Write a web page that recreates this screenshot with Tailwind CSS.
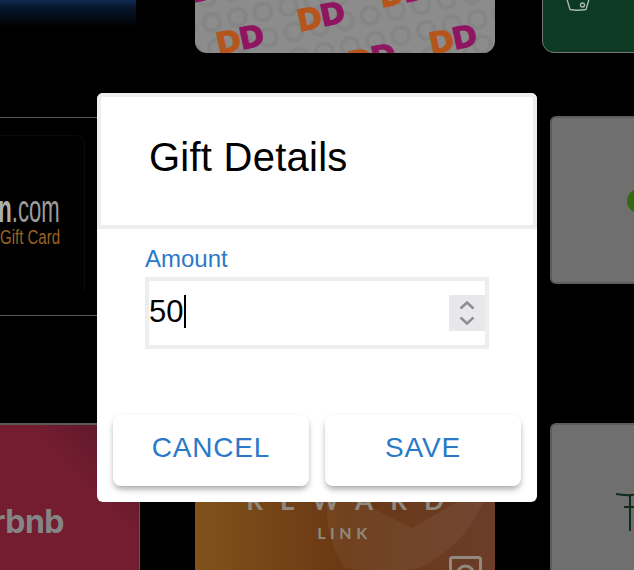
<!DOCTYPE html>
<html lang="en">
<head>
  <meta charset="UTF-8" />
  <meta name="viewport" content="width=device-width, initial-scale=1.0"/>
  <title>Gift Details</title>
  <script src="https://cdn.jsdelivr.net/npm/@tailwindcss/browser@4"></script>
</head>
<body class="bg-black">
  <div class="relative w-[634px] h-[570px] overflow-hidden bg-black font-['Liberation_Sans',sans-serif]">

    <!-- Gift cards dimmed behind the dialog -->
    <div class="absolute left-0 top-0 w-[136px] h-[30px] rounded-br-lg bg-[linear-gradient(#0d2950_0,#0c2546_3px,#081a32_5px,#000_28px)]"></div>

    <div class="absolute left-[195px] top-[-120px] w-[300px] h-[173px] rounded-xl bg-[#8c8c8c] overflow-hidden font-['DejaVu_Sans',sans-serif] font-bold text-[30px] leading-none tracking-[-1.5px]">
      <svg class="absolute inset-0" width="300" height="173">
        <defs>
          <pattern id="donuts" width="26" height="26" patternUnits="userSpaceOnUse" patternTransform="rotate(-12)">
            <circle cx="13" cy="13" r="8.5" fill="none" stroke="#858585" stroke-width="4"/>
          </pattern>
        </defs>
        <rect width="300" height="173" fill="url(#donuts)"/>
      </svg>
      <div class="absolute left-[-28px] top-[98px] -rotate-12 [-webkit-text-stroke:1px]"><span class="text-[#b5551c]">D</span><span class="text-[#8f1560]">D</span></div>
      <div class="absolute left-[21px] top-[145px] -rotate-12 [-webkit-text-stroke:1px]"><span class="text-[#b5551c]">D</span><span class="text-[#8f1560]">D</span></div>
      <div class="absolute left-[102px] top-[122px] -rotate-12 [-webkit-text-stroke:1px]"><span class="text-[#b5551c]">D</span><span class="text-[#8f1560]">D</span></div>
      <div class="absolute left-[184px] top-[98px] -rotate-12 [-webkit-text-stroke:1px]"><span class="text-[#b5551c]">D</span><span class="text-[#8f1560]">D</span></div>
      <div class="absolute left-[234px] top-[145px] -rotate-12 [-webkit-text-stroke:1px]"><span class="text-[#b5551c]">D</span><span class="text-[#8f1560]">D</span></div>
      <div class="absolute left-[153px] top-[164px] -rotate-12 [-webkit-text-stroke:1px]"><span class="text-[#b5551c]">D</span><span class="text-[#8f1560]">D</span></div>
    </div>

    <div class="absolute left-[542px] top-[-100px] w-[200px] h-[153px] rounded-xl border border-[#777] bg-[#0c3a23]">
      <svg class="absolute left-[22px] top-[92px]" width="26" height="20" viewBox="0 0 26 20" fill="none" stroke="#a9b8ae" stroke-width="1.4">
        <path d="M1 3 L5 16.5 Q12 18 21 16.5 L25 3"/>
        <circle cx="17.5" cy="12" r="2"/>
      </svg>
    </div>

    <div class="absolute left-[-20px] top-[117px] w-[180px] h-[199px] border-y border-[#5a5a5a] bg-black">
      <div class="absolute left-0 top-[17px] w-[105px] h-[160px] rounded-lg border-r border-t border-[#0a0a0a]"></div>
      <div class="absolute right-[100px] top-[72px] text-[38px] leading-none text-[#9c9c9c] whitespace-nowrap scale-x-[0.58] origin-right"><span class="font-bold text-[#b0b0b0]">n</span>.com</div>
      <div class="absolute right-[100px] top-[109px] text-[20px] leading-none text-[#9b6320] whitespace-nowrap scale-x-75 origin-right">Gift Card</div>
    </div>

    <div class="absolute left-[550px] top-[116px] w-[200px] h-[168px] rounded-md border-2 border-[#5c5c5c] bg-[#6f6f6f]">
      <div class="absolute left-[75px] top-[71px] w-[24px] h-[24px] rounded-full border-[7px] border-[#356a14]"></div>
    </div>

    <div class="absolute left-[-20px] top-[423px] w-[160px] h-[170px] border-t-2 border-r border-[#5a5a5a] bg-gradient-to-bl from-[#5a1727] from-[6%] to-[#741d31] to-[35%]">
      <div class="absolute right-[75px] top-[81px] text-[32px] leading-none font-bold tracking-[-0.5px] text-[#858585] font-['Inter',sans-serif]">rbnb</div>
    </div>

    <div class="absolute left-[195px] top-[440px] w-[300px] h-[160px] bg-gradient-to-r from-[#80521a] via-[#6a3814] to-[#6b3d28] overflow-hidden font-['Lato',sans-serif] text-center text-[#8f897f]">
      <svg class="absolute left-0 top-0" width="300" height="160" viewBox="0 0 300 160" fill="#ffffff" fill-opacity="0.05">
        <path d="M132 62 L165 62 L217 88 L262 62 L288 62 Q270 105 225 128 Q190 135 150 128 Q130 100 132 62Z"/>
      </svg>
      <div class="absolute left-0 right-0 top-[47px] text-[26px] font-bold leading-none tracking-[17px] pl-[17px]">REWARD</div>
      <div class="absolute left-0 right-0 top-[85px] text-[16px] font-bold leading-none tracking-[4.5px] pr-[1px]">LINK</div>
      <svg class="absolute left-[254px] top-[116px]" width="33" height="30" viewBox="0 0 33 30" fill="none" stroke="#8f897f" stroke-width="3">
        <rect x="1.5" y="1.5" width="30" height="30" rx="2"/>
        <circle cx="16.5" cy="18" r="8"/>
      </svg>
    </div>

    <div class="absolute left-[550px] top-[423px] w-[200px] h-[170px] rounded-md border-l-2 border-t-2 border-[#5c5c5c] bg-[#6f6f6f]">
      <svg class="absolute left-[64px] top-[68px]" width="24" height="42" viewBox="0 0 24 42" fill="none" stroke="#0f2c1b" stroke-width="2">
        <path d="M0 1 Q10 3 20 1.5"/>
        <path d="M8 14 H20"/>
        <path d="M14 2 V38"/>
      </svg>
    </div>

    <!-- Dialog -->
    <div class="absolute inset-0 flex justify-center items-start pt-[93px]">
      <div class="w-[440px] h-[409px] rounded-md bg-white flex flex-col">
        <div class="h-[136px] border-4 border-[#eeeeee] rounded-t-md flex items-center pl-[48px] pb-[8px]">
          <h2 class="text-[40px] leading-none tracking-[0.25px] text-black">Gift Details</h2>
        </div>
        <div class="pl-[48px] pr-[48px] pt-[12px] flex-1">
          <label class="block text-[24px] leading-[36px] text-[#2b79c9]">Amount</label>
          <div class="h-[72px] border-4 border-[#eeeeee] flex items-center justify-between">
            <div class="flex items-center mb-[4px] text-[31px] leading-none text-black">50<span class="ml-[1px] w-[2px] h-[33px] bg-black"></span></div>
            <div class="w-[36px] h-[36px] mb-[1px] bg-[#e8e8ec] flex items-center justify-center">
              <svg width="16" height="26" viewBox="0 0 16 26" fill="none" stroke="#8e8e93" stroke-width="2.5">
                <path d="M1.5 8.5 L8 2.5 L14.5 8.5"/>
                <path d="M1.5 17.5 L8 23.5 L14.5 17.5"/>
              </svg>
            </div>
          </div>
        </div>
        <div class="flex gap-4 px-4 pb-4">
          <button class="flex-1 h-[71px] pb-[6px] rounded-lg bg-white text-[28px] tracking-[0.8px] text-[#2b79c9] shadow-[0_4px_6px_-1px_rgba(0,0,0,0.35),0_-1px_4px_rgba(0,0,0,0.02)]">CANCEL</button>
          <button class="flex-1 h-[71px] pb-[6px] rounded-lg bg-white text-[28px] tracking-[0.8px] text-[#2b79c9] shadow-[0_4px_6px_-1px_rgba(0,0,0,0.35),0_-1px_4px_rgba(0,0,0,0.02)]">SAVE</button>
        </div>
      </div>
    </div>
  </div>
</body>
</html>
